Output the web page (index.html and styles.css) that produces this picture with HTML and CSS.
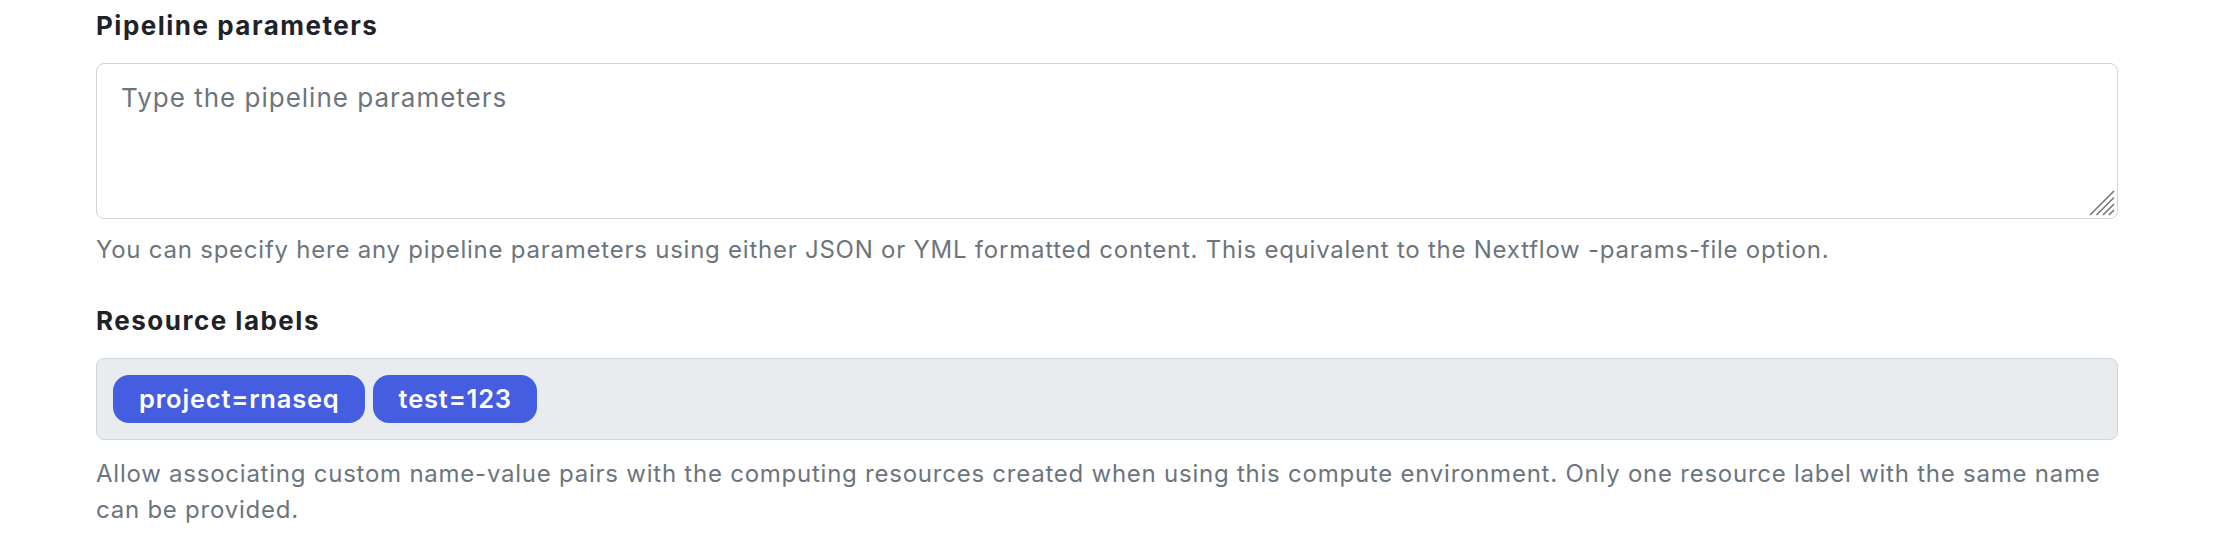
FILE: index.html
```html
<!DOCTYPE html>
<html lang="en">
<head>
<meta charset="utf-8">
<title>Pipeline parameters</title>
<link rel="stylesheet" href="styles.css">
</head>
<body>
<main class="form">
  <section class="field">
    <label class="field-label" for="params">Pipeline parameters</label>
    <div class="textarea-wrap">
      <textarea id="params" class="textarea" placeholder="Type the pipeline parameters"></textarea>
      <svg class="grip" width="26" height="26" viewBox="0 0 26 26" aria-hidden="true">
        <path d="M1 25 L25 1 M7.5 25 L25 7.5 M14 25 L25 14 M20 25 L25 20" stroke="#7b7b7b" stroke-width="1.7" fill="none"/>
      </svg>
    </div>
    <p class="help">You can specify here any pipeline parameters using either JSON or YML formatted content. This equivalent to the Nextflow -params-file option.</p>
  </section>
  <section class="field field-labels">
    <div class="field-label">Resource labels</div>
    <div class="labels-box">
      <span class="chip">project=rnaseq</span>
      <span class="chip">test=123</span>
    </div>
    <p class="help help-last">Allow associating custom name-value pairs with the computing resources created when using this compute environment. Only one resource label with the same name can be provided.</p>
  </section>
</main>
</body>
</html>
```

FILE: styles.css
```css
* { box-sizing: border-box; }

html, body {
  margin: 0;
  padding: 0;
  background: #ffffff;
}

body {
  font-family: Inter, "Noto Sans", sans-serif;
  font-size: 24px;
  line-height: 36px;
  color: #212529;
}

.form {
  margin: 0 96px;
  padding-top: 8px;
}

.field-label {
  display: block;
  font-weight: 700;
  font-size: 26px;
  line-height: 36px;
  letter-spacing: 1.5px;
  color: #1f2328;
  margin-bottom: 19px;
}

.textarea-wrap {
  position: relative;
}

.textarea {
  display: block;
  width: 100%;
  height: 156px;
  margin: 0;
  padding: 16px 24px 14px;
  border: 1px solid #ced4da;
  border-radius: 8px;
  font-family: inherit;
  font-size: 26px;
  line-height: 36px;
  letter-spacing: 1px;
  color: #212529;
  background: #ffffff;
  resize: none;
  outline: none;
}

.textarea::placeholder {
  color: #6c757d;
  opacity: 1;
}

.grip {
  position: absolute;
  right: 3px;
  bottom: 3px;
  pointer-events: none;
}

.help {
  margin: 13px 0 0;
  font-size: 24px;
  line-height: 36px;
  letter-spacing: 0.76px;
  color: #6c757d;
}

.help-last {
  margin-top: 16px;
}

.field-labels {
  margin-top: 35px;
}

.labels-box {
  display: flex;
  flex-wrap: wrap;
  gap: 8px;
  padding: 16px;
  border: 1px solid #ced4da;
  border-radius: 8px;
  background: #e9ecef;
}

.chip {
  display: inline-flex;
  align-items: center;
  height: 48px;
  padding: 0 25px 0 26px;
  border-radius: 16px;
  background: #455de0;
  color: #ffffff;
  font-weight: 600;
  font-size: 25.5px;
  line-height: 36px;
  letter-spacing: 0.8px;
}
```
